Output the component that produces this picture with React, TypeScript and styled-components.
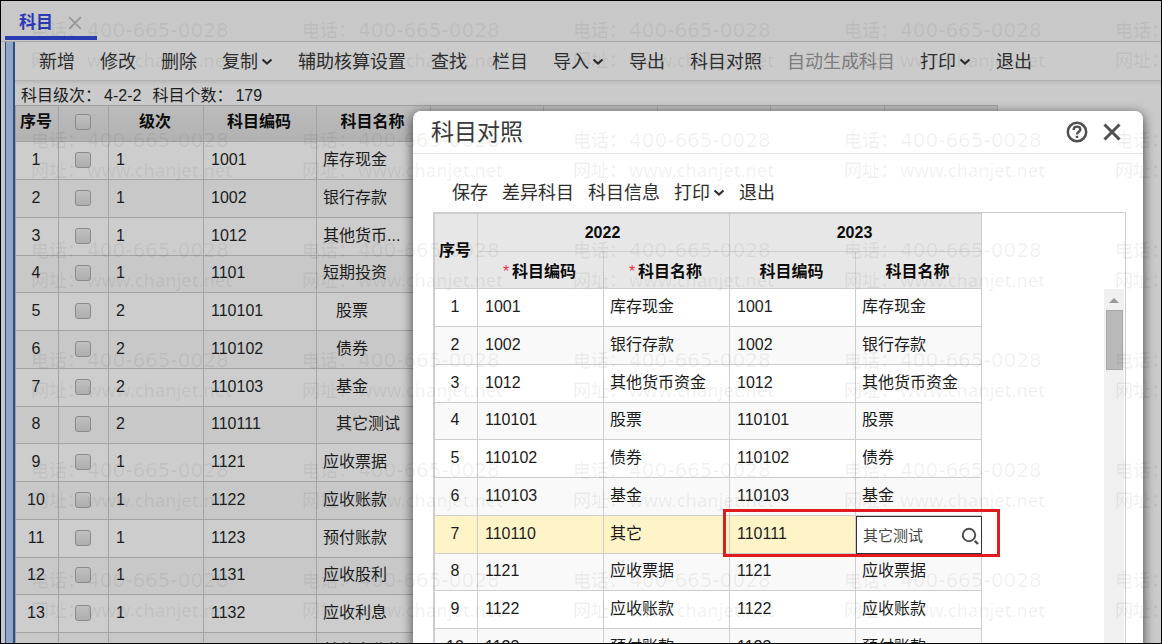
import React from "react";
import styled, { createGlobalStyle, css } from "styled-components";

const GlobalStyle = createGlobalStyle`
  *, *::before, *::after { box-sizing: border-box; }
  body {
    margin: 0;
    font-family: "Liberation Sans", "Noto Sans CJK SC", sans-serif;
    font-size: 16px;
    line-height: 24px;
    color: #1c1c1c;
  }
  button, input {
    font: inherit;
    color: inherit;
    margin: 0;
    padding: 0;
    border: 0;
    background: none;
  }
`;

const Frame = styled.div`
  position: relative;
  display: flex;
  flex-direction: column;
  height: 100vh;
  overflow: hidden;
  border: 1px solid #000;
  background: #c8c8c8;
`;

const TabBar = styled.header`
  display: flex;
  flex: none;
  height: 41px;
  padding-left: 4px;
  border-bottom: 1px solid #a6a6a6;
`;

const Tab = styled.div`
  display: flex;
  align-items: center;
  gap: 15px;
  width: 92px;
  margin-bottom: 1px;
  padding-left: 14px;
  padding-top: 8px;
  border-bottom: 4px solid #2b3bb3;
`;

const TabLabel = styled.button`
  font-size: 17px;
  font-weight: 700;
  color: #2c38b4;
`;

const IconButton = styled.button`
  display: flex;
  align-items: center;
  justify-content: center;
  color: #505050;
`;

const TabClose = styled(IconButton)`
  color: #969696;
`;

const Workspace = styled.div`
  display: flex;
  flex: 1;
  min-height: 0;
`;

const Splitter = styled.div`
  flex: none;
  width: 10px;
  margin-left: 4px;
  border: solid #2d4f88;
  border-width: 0 2px 0 1px;
  background: #91a5c6;
`;

const Main = styled.main`
  flex: 1;
  min-width: 0;
  background: #cacaca;
`;

const Toolbar = styled.nav`
  display: flex;
  align-items: center;
  gap: 25px;
  height: 39px;
  padding: 2px 0 0 24px;
  border-bottom: 1px solid #b0b0b0;
  box-shadow: 0 2px 3px rgba(0, 0, 0, 0.08);
  background: #cbcbcb;
`;

const ToolButton = styled.button`
  display: flex;
  align-items: center;
  gap: 3px;
  font-size: 18px;
  white-space: nowrap;
  color: #2e2e2e;
  &:disabled { color: #7d7d7d; }
`;

const Summary = styled.dl`
  display: flex;
  height: 24px;
  margin: 0;
  padding: 3px 0 0 6px;
  dt { margin-right: 3px; }
  dd { margin: 0 11px 0 0; }
`;

const gridBase = css`
  table-layout: fixed;
  border-collapse: separate;
  border-spacing: 0;
  th, td { padding: 0; white-space: nowrap; }
  th { font-weight: 700; color: #0c0c0c; text-align: center; }
  tbody tr { height: 38px; }
  tbody tr:nth-child(4n) { height: 37px; }
`;

const AccountTable = styled.table`
  ${gridBase}
  width: 983px;
  border: solid #9f9f9f;
  border-width: 1px 0 0 1px;
  th, td { border: solid #a3a3a3; border-width: 0 1px 1px 0; }
  th { height: 36px; padding: 0 2px 4px 0; background: linear-gradient(#bcbcbc, #b2b2b2); }
  tbody tr:nth-child(odd) { background: #cdcdcd; }
  tbody tr:nth-child(even) { background: #c8c8c8; }
`;

const MapTable = styled.table`
  ${gridBase}
  flex: none;
  width: 548px;
  border: solid #cdcdcd;
  border-width: 1px 0 0 1px;
  th, td { border: solid #cdcdcd; border-width: 0 1px 1px 0; }
  th { padding: 0 2px 0 0; background: #e7e7e7; }
  tbody tr:nth-child(odd) { background: #fff; }
  tbody tr:nth-child(even) { background: #f9f9f9; }
  tbody tr[aria-selected="true"] { background: #fef4c8; }
`;

const HeadRow = styled.tr<{ $h: number; $drop?: number }>`
  height: ${(p) => p.$h}px;
  && th { padding-top: ${(p) => p.$drop ?? 0}px; }
`;

const NumCell = styled.td`
  text-align: center;
  && { padding: 0 2px 2px 0; }
`;

const CheckCell = styled.td`
  && { padding: 0 2px 2px 0; }
`;

const CodeCell = styled.td`
  position: relative;
  && { padding: 0 0 2px 7px; }
`;

const NameCell = styled.td<{ $indent?: boolean }>`
  && { padding: 0 0 2px ${(p) => (p.$indent ? 19 : 6)}px; }
`;

const Check = styled.input`
  appearance: none;
  display: block;
  width: 16px;
  height: 16px;
  margin: 0 auto;
  border: 1px solid #8a8a8a;
  border-radius: 3px;
  background: linear-gradient(#c0c0c0, #aeaeae);
`;

const DialogShadow = styled.div`
  position: absolute;
  top: 110px;
  right: 18px;
  bottom: -20px;
  left: 412px;
  border-radius: 8px;
  box-shadow: 0 3px 11px 1px rgba(0, 0, 0, 0.6);
`;

const Dialog = styled.section`
  position: absolute;
  top: 110px;
  right: 18px;
  bottom: 0;
  left: 412px;
  display: flex;
  flex-direction: column;
  overflow: hidden;
  border-radius: 8px 8px 0 0;
  background: #fff;
`;

const DialogHead = styled.header`
  display: flex;
  flex: none;
  align-items: center;
  gap: 15px;
  height: 43px;
  padding: 0 22px 1px 18px;
  border-bottom: 1px solid #e4e4e4;
`;

const DialogTitle = styled.h2`
  flex: 1;
  margin: 0;
  font-size: 23px;
  font-weight: 400;
  line-height: 32px;
  color: #3a3a3a;
`;

const DialogTools = styled.nav`
  display: flex;
  flex: none;
  align-items: center;
  gap: 14px;
  height: 58px;
  padding: 20px 0 0 39px;
`;

const GridBox = styled.div`
  display: flex;
  flex: 1;
  min-height: 0;
  margin: 0 17px 0 20px;
  border: solid #cdcdcd;
  border-width: 1px 1px 0 1px;
  overflow: hidden;
`;

const ScrollTrack = styled.div`
  display: flex;
  flex-direction: column;
  align-items: center;
  width: 20px;
  margin: 76px 1px 0 auto;
  background: #f0f0f0;
`;

const ScrollArrow = styled.div`
  flex: none;
  width: 0;
  height: 0;
  margin: 9px 0 7px;
  border: solid transparent;
  border-width: 0 5px 5px;
  border-bottom-color: #9a9a9a;
`;

const ScrollThumb = styled.div`
  width: 17px;
  height: 60px;
  border: 1px solid #a8a8a8;
  background: #b9b9b9;
`;

const Required = styled.span`
  margin-right: 3px;
  font-weight: 400;
  color: #e8304a;
`;

const Lookup = styled.div`
  display: flex;
  align-items: center;
  height: 38px;
  margin: -1px -1px -1px 0;
  padding: 2px 2px 0 6px;
  border: 1px solid #333;
  background: #fff;
`;

const LookupInput = styled.input`
  flex: 1;
  min-width: 0;
  font-size: 15px;
  color: #444;
  outline: none;
`;

const Highlight = styled.span`
  position: absolute;
  top: -7px;
  bottom: -4px;
  left: -7px;
  z-index: 1;
  width: calc(200% + 27px);
  border: 3px solid #e01a20;
  pointer-events: none;
`;

const Watermarks = styled.div`
  position: absolute;
  inset: 0;
  z-index: 2;
  display: grid;
  grid-template-columns: repeat(5, 271px);
  grid-auto-rows: 110px;
  padding: 14px 0 0 30px;
  overflow: hidden;
  pointer-events: none;
  color: rgba(0, 0, 0, 0.06);
  font-family: "Noto Sans", "Noto Sans CJK SC", sans-serif;
  font-size: 18px;
  font-weight: 500;
  line-height: 30px;
`;

const Mark = styled.div`
  display: grid;
  grid-template-columns: 56px 1fr;
  align-content: start;
  white-space: nowrap;
`;

const MarkPhone = styled.span`
  font-family: "DejaVu Sans", sans-serif;
  font-size: 20px;
`;

const Chevron = () => (
  <svg width="12" height="8" viewBox="0 0 12 8" fill="none" stroke="currentColor" strokeWidth="2.2" aria-hidden="true">
    <path d="M1.500 1.500 6 5.500 10.500 1.500" />
  </svg>
);

const CrossIcon = ({ size, width }: { size: number; width: number }) => (
  <svg width={size} height={size} viewBox="0 0 18 18" fill="none" stroke="currentColor" strokeWidth={width} aria-hidden="true">
    <path d="M1.500 1.500 16.500 16.500M16.500 1.500 1.500 16.500" />
  </svg>
);

const HelpIcon = () => (
  <svg width="22" height="22" viewBox="0 0 22 22" fill="none" stroke="currentColor" aria-hidden="true">
    <circle cx="11" cy="11" r="9.200" strokeWidth="2.500" />
    <path d="M7.600 8.900c0-2 1.500-3.200 3.400-3.200s3.400 1.100 3.400 2.800c0 2.200-3.400 2.400-3.400 4.900" strokeWidth="2.300" />
    <path d="M11 14.700v2.300" strokeWidth="2.500" />
  </svg>
);

const SearchIcon = () => (
  <svg width="18" height="18" viewBox="0 0 18 18" fill="none" stroke="currentColor" aria-hidden="true">
    <circle cx="8" cy="8" r="6.200" strokeWidth="2" />
    <path d="M13.800 13.800 17 17" strokeWidth="2.400" />
  </svg>
);

type Tool = { label: string; menu?: boolean; disabled?: boolean };

const mainTools: Tool[] = [
  { label: "新增" },
  { label: "修改" },
  { label: "删除" },
  { label: "复制", menu: true },
  { label: "辅助核算设置" },
  { label: "查找" },
  { label: "栏目" },
  { label: "导入", menu: true },
  { label: "导出" },
  { label: "科目对照" },
  { label: "自动生成科目", disabled: true },
  { label: "打印", menu: true },
  { label: "退出" },
];

const dialogTools: Tool[] = [
  { label: "保存" },
  { label: "差异科目" },
  { label: "科目信息" },
  { label: "打印", menu: true },
  { label: "退出" },
];

const accounts: [number, string, string][] = [
  [1, "1001", "库存现金"],
  [1, "1002", "银行存款"],
  [1, "1012", "其他货币..."],
  [1, "1101", "短期投资"],
  [2, "110101", "股票"],
  [2, "110102", "债券"],
  [2, "110103", "基金"],
  [2, "110111", "其它测试"],
  [1, "1121", "应收票据"],
  [1, "1122", "应收账款"],
  [1, "1123", "预付账款"],
  [1, "1131", "应收股利"],
  [1, "1132", "应收利息"],
  [1, "1221", "其他应收款"],
];

const mappings: [string, string, string, string][] = [
  ["1001", "库存现金", "1001", "库存现金"],
  ["1002", "银行存款", "1002", "银行存款"],
  ["1012", "其他货币资金", "1012", "其他货币资金"],
  ["110101", "股票", "110101", "股票"],
  ["110102", "债券", "110102", "债券"],
  ["110103", "基金", "110103", "基金"],
  ["110110", "其它", "110111", "其它测试"],
  ["1121", "应收票据", "1121", "应收票据"],
  ["1122", "应收账款", "1122", "应收账款"],
  ["1123", "预付账款", "1123", "预付账款"],
];

const accountColumns = [43, 50, 95, 113, 114, 113, 114, 113, 114, 113];
const mapColumns = [43, 126, 126, 126, 126];
const selectedRow = 6;

const Columns = ({ widths }: { widths: number[] }) => (
  <colgroup>
    {widths.map((w, i) => (
      <col key={i} width={w} />
    ))}
  </colgroup>
);

const Tools = ({ items }: { items: Tool[] }) => (
  <>
    {items.map((t) => (
      <ToolButton key={t.label} type="button" disabled={t.disabled}>
        {t.label}
        {t.menu && <Chevron />}
      </ToolButton>
    ))}
  </>
);

export default function App() {
  return (
    <>
      <GlobalStyle />
      <Frame>
        <TabBar>
          <Tab>
            <TabLabel type="button">科目</TabLabel>
            <TabClose type="button" aria-label="关闭标签">
              <CrossIcon size={14} width={2} />
            </TabClose>
          </Tab>
        </TabBar>
        <Workspace>
          <Splitter />
          <Main>
            <Toolbar>
              <Tools items={mainTools} />
            </Toolbar>
            <Summary>
              <dt>科目级次：</dt>
              <dd>4-2-2</dd>
              <dt>科目个数：</dt>
              <dd>179</dd>
            </Summary>
            <AccountTable>
              <Columns widths={accountColumns} />
              <thead>
                <tr>
                  <th>序号</th>
                  <th>
                    <Check type="checkbox" aria-label="全选" />
                  </th>
                  <th>级次</th>
                  <th>科目编码</th>
                  <th>科目名称</th>
                  <th />
                  <th />
                  <th />
                  <th />
                  <th />
                </tr>
              </thead>
              <tbody>
                {accounts.map(([level, code, name], i) => (
                  <tr key={code}>
                    <NumCell>{i + 1}</NumCell>
                    <CheckCell>
                      <Check type="checkbox" aria-label={`选择 ${code}`} />
                    </CheckCell>
                    <CodeCell>{level}</CodeCell>
                    <CodeCell>{code}</CodeCell>
                    <NameCell $indent={level === 2}>{name}</NameCell>
                    <td />
                    <td />
                    <td />
                    <td />
                    <td />
                  </tr>
                ))}
              </tbody>
            </AccountTable>
          </Main>
        </Workspace>

        <DialogShadow />
        <Dialog role="dialog" aria-labelledby="map-title">
          <DialogHead>
            <DialogTitle id="map-title">科目对照</DialogTitle>
            <IconButton type="button" aria-label="帮助">
              <HelpIcon />
            </IconButton>
            <IconButton type="button" aria-label="关闭">
              <CrossIcon size={18} width={3} />
            </IconButton>
          </DialogHead>
          <DialogTools>
            <Tools items={dialogTools} />
          </DialogTools>
          <GridBox>
            <MapTable>
              <Columns widths={mapColumns} />
              <thead>
                <HeadRow $h={38}>
                  <th rowSpan={2}>序号</th>
                  <th colSpan={2}>2022</th>
                  <th colSpan={2}>2023</th>
                </HeadRow>
                <HeadRow $h={37} $drop={3}>
                  <th>
                    <Required>*</Required>科目编码
                  </th>
                  <th>
                    <Required>*</Required>科目名称
                  </th>
                  <th>科目编码</th>
                  <th>科目名称</th>
                </HeadRow>
              </thead>
              <tbody>
                {mappings.map(([fromCode, fromName, toCode, toName], i) => (
                  <tr key={fromCode} aria-selected={i === selectedRow}>
                    <NumCell>{i + 1}</NumCell>
                    <CodeCell>{fromCode}</CodeCell>
                    <NameCell>{fromName}</NameCell>
                    <CodeCell>
                      {toCode}
                      {i === selectedRow && <Highlight />}
                    </CodeCell>
                    {i === selectedRow ? (
                      <td>
                        <Lookup>
                          <LookupInput aria-label="科目名称" defaultValue={toName} />
                          <IconButton type="button" aria-label="查找科目">
                            <SearchIcon />
                          </IconButton>
                        </Lookup>
                      </td>
                    ) : (
                      <NameCell>{toName}</NameCell>
                    )}
                  </tr>
                ))}
              </tbody>
            </MapTable>
            <ScrollTrack>
              <ScrollArrow />
              <ScrollThumb />
            </ScrollTrack>
          </GridBox>
        </Dialog>

        <Watermarks aria-hidden="true">
          {Array.from({ length: 30 }, (_, i) => (
            <Mark key={i}>
              <span>电话：</span>
              <MarkPhone>400-665-0028</MarkPhone>
              <span>网址：</span>
              <span>www.chanjet.net</span>
            </Mark>
          ))}
        </Watermarks>
      </Frame>
    </>
  );
}
